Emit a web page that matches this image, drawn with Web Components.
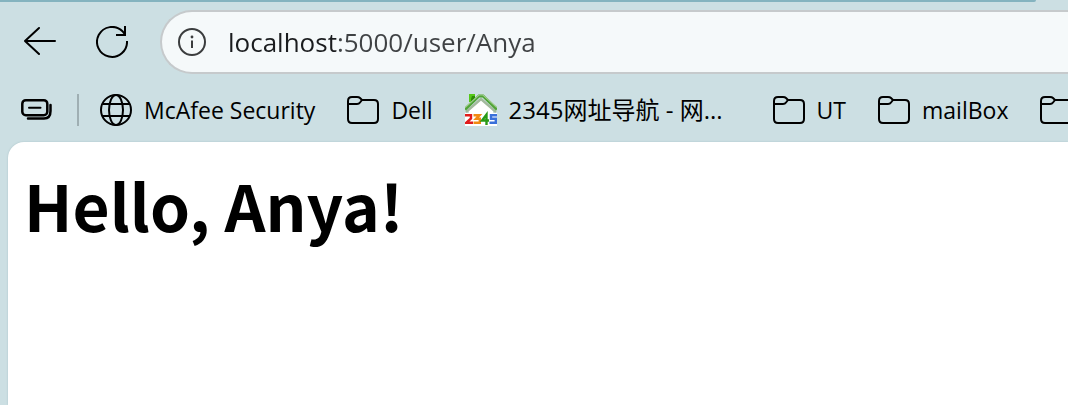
<!DOCTYPE html>
<html lang="en">
<head>
<meta charset="utf-8">
<title>localhost:5000/user/Anya</title>
<style>
body { margin: 0; font-family: "Open Sans", "Noto Sans CJK SC", sans-serif; color: #000; background: #ccdfe3; }
</style>
</head>
<body>
<browser-window>
  <browser-toolbar slot="toolbar"></browser-toolbar>
  <bookmarks-bar slot="bookmarks">
    <bookmark-item icon="globe">McAfee Security</bookmark-item>
    <bookmark-item icon="folder">Dell</bookmark-item>
    <bookmark-item icon="house" lang="zh">2345网址导航 - 网...</bookmark-item>
    <bookmark-item icon="folder">UT</bookmark-item>
    <bookmark-item icon="folder">mailBox</bookmark-item>
    <bookmark-item icon="folder"></bookmark-item>
  </bookmarks-bar>
  <page-greeting>Hello, Anya!</page-greeting>
</browser-window>
<script>
const ICONS = {
  back: '<g fill="none" stroke="#000" stroke-width="2" stroke-linecap="round" stroke-linejoin="round"><path d="M15 2 1 15 15 28M1 15H31"/></g>',
  reload: '<g fill="none" stroke="#000" stroke-width="2"><path d="M31 15A15 15 0 1 1 26.5 5.2L29 8.500M20 9H29V0"/></g>',
  info: '<circle cx="16" cy="16" r="13" fill="none" stroke="#3b3d3e" stroke-width="2"/><path d="M16 14.500V22" stroke="#3b3d3e" stroke-width="2"/><circle cx="16" cy="11" r="1.400" fill="#3b3d3e"/>',
  stack: '<g fill="none" stroke="#000" stroke-width="2.500" stroke-linecap="round"><rect x="2.300" y="6.200" width="25" height="15" rx="3.500"/><path d="M9 13.800H20.500" stroke-width="2"/><path d="M30.500 11V17Q30.500 24.500 24 24.500H8"/></g>',
  globe: '<g fill="none" stroke="#000" stroke-width="2"><circle cx="16" cy="16" r="15"/><ellipse cx="16" cy="16" rx="7" ry="15"/><path d="M2.500 10H29.500M2.500 22H29.500"/></g>',
  folder: '<g fill="none" stroke="#000" stroke-width="2" stroke-linejoin="round"><path d="M1 7Q1 3 5 3H10Q12 3 13 4L15 6H27Q31 6 31 10V25Q31 29 27 29H5Q1 29 1 25Z"/><path d="M1 10H10Q12 10 13 8.500L15 6"/></g>',
  house: '<path d="M4 15 16 4 28 15V19H32V32H0V19H4Z" fill="#fff"/><path d="M4 0H10V8H4Z" fill="#55c818"/><path d="M7 2H10V8H6V5Z" fill="#2c8a08"/><g fill="none" stroke-width="2.400"><path d="M1 18 16 5 31 18" stroke="#a3b99d"/><path d="M0 15.500 14 2H18L32 15.500" stroke="#4fa436" stroke-width="2.800"/><path d="M0 13.500 14 1H18L32 13.500" stroke="#9fca8d" stroke-width="1.200"/><path d="M0 21.200H6V24.500L1.200 28.800H8" stroke="#e01c1c"/><path d="M8.500 21.200H14.500L11 24.800H14.800V28.800H8.500" stroke="#f28a12"/><path d="M21.500 31V20.500L17 26.500H24" stroke="#299a16"/><path d="M32 21.200H26V24.800H30.800V28.800H24.500" stroke="#3a70da"/></g>'
};
const icon = (name) => `<svg viewBox="0 0 32 32" aria-hidden="true">${ICONS[name]}</svg>`;

function define(name, markup) {
  const template = document.createElement('template');
  customElements.define(name, class extends HTMLElement {
    constructor() {
      super();
      template.innerHTML = typeof markup === 'function' ? markup(this) : markup;
      this.attachShadow({ mode: 'open' }).append(template.content.cloneNode(true));
    }
  });
}

const reset = `*{box-sizing:border-box} svg{display:block;width:32px;height:32px;flex:none}
button{border:0;background:none;padding:0;margin:0;flex:none}`;

define('browser-window', `<style>
:host{display:flex;flex-direction:column;min-height:100vh;overflow:hidden}
.strip{height:2px;margin-right:32px;background:#84b3bf;border-bottom-right-radius:4px}
main{flex:1;margin-left:8px;background:#fff;border-top-left-radius:16px;box-shadow:0 0 2px #a5bfc4}
</style><div class="strip"></div><slot name="toolbar"></slot><slot name="bookmarks"></slot><main><slot></slot></main>`);

define('browser-toolbar', `<style>${reset}
:host{display:flex;align-items:center;padding:8px 0 8px 24px;gap:40px}
label{flex:1;display:flex;align-items:center;gap:20px;height:64px;margin-left:-8px;padding-left:14px;background:#f5f9fa;border:2px solid #c6cacc;border-right:0;border-radius:32px 0 0 32px}
input{flex:1;min-width:0;border:0;outline:0;padding:0;font:26px/36px "Open Sans",sans-serif;color:transparent;background:linear-gradient(90deg,#1a1c1e 110px,#3f4244 110px);-webkit-background-clip:text;background-clip:text}
</style>
<button type="button" aria-label="Back">${icon('back')}</button>
<button type="button" aria-label="Reload">${icon('reload')}</button>
<label>${icon('info')}<input type="text" aria-label="Address" value="localhost:5000/user/Anya"></label>`);

define('bookmarks-bar', `<style>${reset}
:host{display:flex;align-items:center;height:60px;padding:0 0 4px 20px;box-sizing:border-box;overflow:hidden}
.rule{width:2px;height:32px;margin:0 21px 0 25px;background:#9fafb3;flex:none}
nav{display:flex;gap:32px}
</style><button type="button" aria-label="Tab groups">${icon('stack')}</button><span class="rule"></span><nav aria-label="Favorites"><slot></slot></nav>`);

define('bookmark-item', (host) => `<style>${reset}
:host{display:block;flex:none}
a{display:flex;align-items:center;gap:12px;color:inherit;text-decoration:none;font-size:23px;line-height:32px;white-space:nowrap}
:host([lang=zh]) a{font-size:24px}
:host([lang=zh]) span{min-width:232px}
</style><a href="#">${icon(host.getAttribute('icon'))}<span><slot></slot></span></a>`);

define('page-greeting', `<style>
:host{display:block;padding:14px 16px}
h1{margin:0;font:bold 64px/96px "Noto Sans CJK SC",sans-serif}
</style><h1><slot></slot></h1>`);
</script>
</body>
</html>
